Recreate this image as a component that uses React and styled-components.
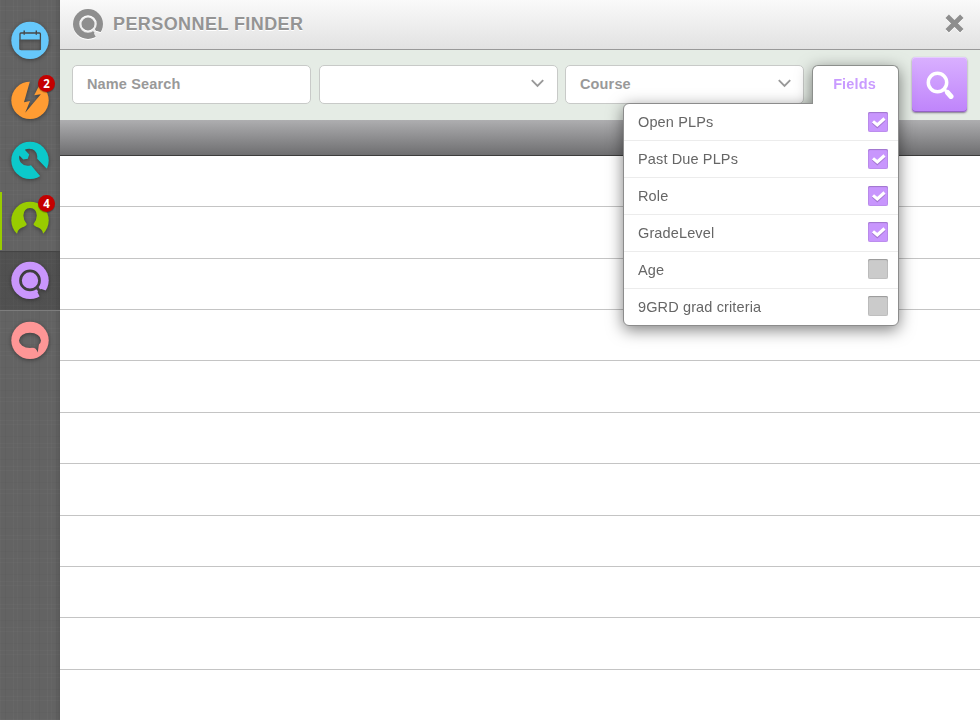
import React, { useState } from "react";
import styled, { createGlobalStyle, css } from "styled-components";

const GlobalStyle = createGlobalStyle`
  * { box-sizing: border-box; }
  body {
    margin: 0;
    background: #fff;
    font-family: "Liberation Sans", Arial, sans-serif;
  }
`;

const Shell = styled.div`
  display: flex;
  width: 980px;
  height: 720px;
  overflow: hidden;
`;

const Sidebar = styled.nav`
  width: 60px;
  flex: none;
  padding-top: 10px;
  background-color: #636363;
  background-image:
    linear-gradient(90deg, transparent 55px, rgba(0, 0, 0, 0.1)),
    repeating-linear-gradient(90deg, rgba(255, 255, 255, 0.02) 0 1px, transparent 1px 5px, rgba(0, 0, 0, 0.03) 5px 6px, transparent 6px 13px, rgba(255, 255, 255, 0.025) 13px 14px, transparent 14px 17px),
    repeating-linear-gradient(0deg, rgba(255, 255, 255, 0.02) 0 1px, transparent 1px 7px, rgba(0, 0, 0, 0.025) 7px 8px, transparent 8px 19px, rgba(255, 255, 255, 0.02) 19px 20px, transparent 20px 23px);
`;

const NavItem = styled.a`
  position: relative;
  display: flex;
  justify-content: center;
  align-items: center;
  width: 60px;
  height: 60px;
  ${(p) =>
    p.$marked &&
    css`
      background: linear-gradient(#9c0, #9c0) 0 2px / 2px 59px no-repeat;
    `}
  ${(p) =>
    p.$selected &&
    css`
      background: linear-gradient(transparent 1px, #444 1px 2px, rgba(0, 0, 0, 0.19) 2px);
      box-shadow: 0 1px 0 #7d7d7d;
    `}
`;

const NavIcon = styled.svg`
  width: 40px;
  height: 40px;
  overflow: visible;
  filter: drop-shadow(0 1px 2px rgba(0, 0, 0, 0.4));
`;

const Badge = styled.span`
  position: absolute;
  top: 4.5px;
  left: 38px;
  width: 17px;
  height: 17px;
  border-radius: 50%;
  background: #c40000;
  color: #fff;
  font: bold 11.5px/17px "Open Sans", sans-serif;
  text-align: center;
  box-shadow: 0 1px 1px rgba(0, 0, 0, 0.3);
`;

const Main = styled.main`
  flex: 1;
  display: flex;
  flex-direction: column;
  min-width: 0;
`;

const TitleBar = styled.header`
  display: flex;
  align-items: center;
  flex: none;
  height: 50px;
  padding: 0 16px 2px 13px;
  background: linear-gradient(#fafafa, #e2e2e2);
  border-bottom: 1px solid #999;
`;

const TitleIcon = styled.svg`
  width: 30px;
  height: 30px;
  margin-right: 10px;
  filter: drop-shadow(0 1px 0 #fff);
`;

const Title = styled.h1`
  flex: 1;
  margin: 0;
  padding-top: 1px;
  font-size: 18px;
  line-height: 22px;
  letter-spacing: 0.42px;
  color: #949494;
  text-shadow: 0 1px 0 #fff;
`;

const CloseIcon = styled.svg`
  width: 19px;
  height: 19px;
  filter: drop-shadow(0 1px 0 #fff);
`;

const Toolbar = styled.div`
  position: relative;
  z-index: 1;
  display: flex;
  align-items: flex-start;
  flex: none;
  height: 70px;
  padding: 15px 12px 0;
  background: #e5ece5;
`;

const Field = styled.div`
  display: flex;
  align-items: center;
  width: 239px;
  height: 39px;
  margin-right: ${(p) => p.$gap}px;
  padding: 0 12px 1px 14px;
  background: #fff;
  border: 1px solid #c8cac8;
  border-radius: 5px;
  color: #999;
  font-size: 14.5px;
  font-weight: bold;
  letter-spacing: 0.14px;
`;

const Chevron = styled.svg`
  width: 13px;
  height: 9px;
  margin: 0 ${(p) => p.$inset}px 1px auto;
`;

const FieldsMenu = styled.div`
  position: relative;
  width: 87px;
  filter: drop-shadow(0 4px 8px rgba(0, 0, 0, 0.5));
`;

const FieldsTab = styled.button`
  position: relative;
  z-index: 1;
  display: block;
  width: 87px;
  height: 39px;
  padding: 0 2px 2px 0;
  background: #fff;
  border: 1px solid #8c8f8c;
  border-bottom: 0;
  border-radius: 6px 6px 0 0;
  color: #c99bff;
  font: bold 14.5px "Liberation Sans", sans-serif;
  letter-spacing: 0.14px;
`;

const FieldsPanel = styled.ul`
  position: absolute;
  top: 38px;
  right: 0;
  width: 276px;
  margin: 0;
  padding: 0;
  list-style: none;
  background: #fff;
  border: 1px solid #8c8c8c;
  border-radius: 6px 0 6px 6px;
`;

const Option = styled.li`
  display: flex;
  align-items: center;
  justify-content: space-between;
  height: 37px;
  padding: 0 10px 0 14px;
  border-bottom: 1px solid #ececec;
  color: #666;
  font-size: 14.5px;
  letter-spacing: 0.13px;
  &:last-child { border-bottom: 0; height: 36px; }
  &:nth-child(n + 4) > span { margin-bottom: 2px; }
`;

const CheckBox = styled.span`
  display: flex;
  width: 20px;
  height: 20px;
  border-radius: 2px;
  background: ${(p) => (p.$on ? "#c896fd" : "#cbcbcb")};
  box-shadow: inset 0 1px 1px ${(p) => (p.$on ? "#a076ce" : "#999")}, inset 0 0 0 1px rgba(0, 0, 0, 0.06);
`;

const SearchButton = styled.button`
  display: flex;
  align-items: center;
  justify-content: center;
  width: 55px;
  height: 55px;
  margin: -8px 0 0 13px;
  padding: 1px 0 0;
  border: 0;
  border-radius: 4px;
  background: linear-gradient(#d9b0ff, #bf84fb);
  box-shadow: inset 0 1px 0 #e6ccff, inset 0 -1px 0 #9462c6, 0 1px 2px rgba(60, 40, 80, 0.6);
`;

const GridHead = styled.div`
  flex: none;
  height: 36px;
  background: linear-gradient(#aeaeb0, #6e6e70);
  border-bottom: 1px solid #3c3c3c;
`;

const GridRow = styled.div`
  flex: none;
  height: 51.37px;
  border-bottom: 1px solid #c4c4c4;
`;

/* A filled disc with its pictogram punched out. */
const Disc = ({ id, fill, children }) => (
  <>
    <mask id={id} maskUnits="userSpaceOnUse" x="0" y="0" width="40" height="40">
      <rect width="40" height="40" fill="#fff" />
      {children}
    </mask>
    <circle cx="20" cy="20.4" r="18.7" fill={fill} mask={`url(#${id})`} />
  </>
);

const CalendarGlyph = () => (
  <Disc id="calendar" fill="#66c8fb">
    <rect x="10" y="13" width="20.4" height="16.6" rx="1" fill="none" stroke="#000" strokeWidth="1.3" />
    <path d="M9.5 19.6H31V29q0 1-1 1H10.5q-1 0-1-1z" />
    <path d="M14.2 10.4v4.300M26.300 10.400v4.300" stroke="#000" strokeWidth="1.400" />
  </Disc>
);

const BoltGlyph = () => (
  <Disc id="bolt" fill="#ff9c33">
    <path d="M20.300 0L14 22.200L20 20.900L15.200 32.800L30.800 14.200L24.200 15.300L30 4V0Z" />
  </Disc>
);

const WrenchGlyph = () => (
  <Disc id="wrench" fill="#0cc9cb">
    <path d="M14.800 9.800Q18.500 7.800 22.500 9.300Q27.800 11.800 27.200 18.800L40 32L33 39.500L21 25.200Q14.800 27.200 11 22.800Q8.500 19.600 9.400 15.500L13.200 19.600L17.800 18.800L19.200 14.500Z" />
  </Disc>
);

const PersonGlyph = () => (
  <Disc id="person" fill="#9c0">
    <path d="M5 40L7.200 33.300Q8 28.800 12 27.400Q16.700 26 16.700 24Q13.400 20 13.400 15.500Q13.800 8 20.100 8Q26.400 8 26.800 15.500Q26.800 20 23.500 24Q23.500 26 28.200 27.400Q32.200 28.800 33 33.300L35 40Z" />
  </Disc>
);

const FinderGlyph = ({ id, fill }) => (
  <Disc id={id} fill={fill}>
    <circle cx="20" cy="20.400" r="9.500" fill="none" stroke="#000" strokeWidth="2.700" />
    <path d="M25.500 28.500L28 31L27.600 32.600L31.500 40H40V32L31.500 29L30 29.200L28 26Z" />
  </Disc>
);

const ChatGlyph = () => (
  <Disc id="chat" fill="#fe9696">
    <ellipse cx="20" cy="20.400" rx="11" ry="7.600" />
    <path d="M21.500 27Q26.500 28 27.700 32.400L29 24Z" />
  </Disc>
);

const navItems = [
  { id: "calendar", glyph: <CalendarGlyph /> },
  { id: "activity", glyph: <BoltGlyph />, badge: 2 },
  { id: "tools", glyph: <WrenchGlyph /> },
  { id: "people", glyph: <PersonGlyph />, badge: 4, marked: true },
  { id: "finder", glyph: <FinderGlyph id="finder" fill="#c996fc" />, selected: true },
  { id: "messages", glyph: <ChatGlyph /> },
];

const initialOptions = [
  { label: "Open PLPs", on: true },
  { label: "Past Due PLPs", on: true },
  { label: "Role", on: true },
  { label: "GradeLevel", on: true },
  { label: "Age", on: false },
  { label: "9GRD grad criteria", on: false },
];

const Arrow = ({ inset }) => (
  <Chevron viewBox="0 0 13 9" $inset={inset}>
    <path d="M0.800 1.200L6.500 7L12.200 1.200" fill="none" stroke="#999" strokeWidth="1.900" />
  </Chevron>
);

export default function App() {
  const [options, setOptions] = useState(initialOptions);
  const toggle = (label) =>
    setOptions(options.map((o) => (o.label === label ? { ...o, on: !o.on } : o)));

  return (
    <>
      <GlobalStyle />
      <Shell>
        <Sidebar>
          {navItems.map((n) => (
            <NavItem key={n.id} $marked={n.marked} $selected={n.selected}>
              <NavIcon viewBox="0 0 40 40">{n.glyph}</NavIcon>
              {n.badge && <Badge>{n.badge}</Badge>}
            </NavItem>
          ))}
        </Sidebar>
        <Main>
          <TitleBar>
            <TitleIcon viewBox="1.300 1.700 37.400 37.400">
              <FinderGlyph id="title-finder" fill="#8e8e8e" />
            </TitleIcon>
            <Title>PERSONNEL FINDER</Title>
            <CloseIcon viewBox="0 0 19 19">
              <path d="M2.200 2.200L16.800 16.800M16.800 2.200L2.200 16.800" stroke="#8e8e8e" strokeWidth="4.800" />
            </CloseIcon>
          </TitleBar>
          <Toolbar>
            <Field $gap={8}>Name Search</Field>
            <Field $gap={7}>
              <Arrow inset={1} />
            </Field>
            <Field $gap={8}>
              Course
              <Arrow inset={0} />
            </Field>
            <FieldsMenu>
              <FieldsTab>Fields</FieldsTab>
              <FieldsPanel>
                {options.map((o) => (
                  <Option key={o.label} onClick={() => toggle(o.label)}>
                    {o.label}
                    <CheckBox $on={o.on}>
                      {o.on && (
                        <svg width="20" height="20" viewBox="0 0 20 20">
                          <path d="M5 10.400L9.300 14.300L16.500 7.600" fill="none" stroke="#8d62b8" strokeOpacity=".6" strokeWidth="3.200" />
                          <path d="M5 9.300L9.300 13L16.500 6.500" fill="none" stroke="#fff" strokeWidth="3.100" />
                        </svg>
                      )}
                    </CheckBox>
                  </Option>
                ))}
              </FieldsPanel>
            </FieldsMenu>
            <SearchButton aria-label="Search">
              <svg width="28" height="28" viewBox="0 0 28 28">
                <circle cx="11.500" cy="11.500" r="9.200" fill="none" stroke="#fff" strokeWidth="3.500" />
                <path d="M18 18L21 21" stroke="#fff" strokeWidth="3" />
                <path d="M21.500 21.500L25 25.500" stroke="#fff" strokeWidth="5" strokeLinecap="round" />
              </svg>
            </SearchButton>
          </Toolbar>
          <GridHead />
          {Array.from({ length: 11 }, (_, i) => (
            <GridRow key={i} />
          ))}
        </Main>
      </Shell>
    </>
  );
}
